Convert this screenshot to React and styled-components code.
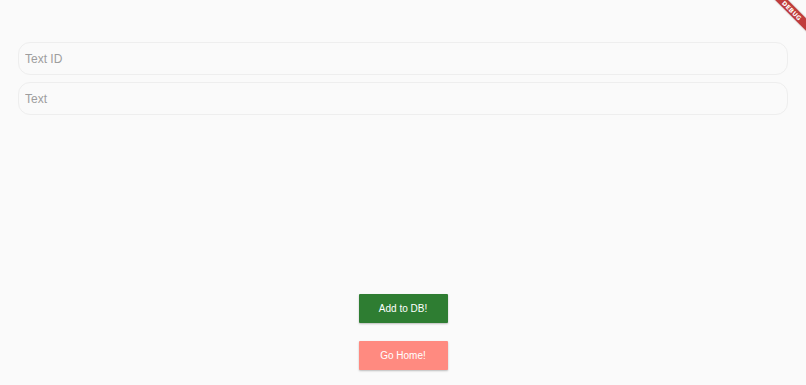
import React from 'react'
import styled, { createGlobalStyle } from 'styled-components'

const Global = createGlobalStyle`
  html, body { margin: 0; padding: 0; background: #fafafa; overflow: hidden; }
  body { font-family: "Liberation Sans", Arial, sans-serif; }
`

const Page = styled.div`
  position: relative;
  height: 385px;
  display: flex;
  flex-direction: column;
  padding: 42px 18px 15px;
  box-sizing: border-box;
  overflow: hidden;
`

const Fields = styled.div`
  display: flex;
  flex-direction: column;
  gap: 7px;
`

const Field = styled.input`
  height: 33px;
  box-sizing: border-box;
  border: 1px solid #eeeeee;
  border-radius: 12px;
  background: #fafafa;
  padding: 0 6px;
  font-family: "Liberation Sans", Arial, sans-serif;
  font-size: 12px;
  color: #333;
  outline: none;
  &::placeholder { color: #9e9e9e; }
`

const Actions = styled.div`
  margin-top: auto;
  display: flex;
  flex-direction: column;
  align-items: center;
  gap: 18px;
`

const Button = styled.button`
  width: 89px;
  height: 29px;
  border: none;
  border-radius: 1px;
  background: ${p => p.$bg};
  color: #fff;
  font-family: "Liberation Sans", Arial, sans-serif;
  font-size: 10px;
  box-shadow: 0 1px 2px rgba(0,0,0,0.25);
  cursor: pointer;
`

const Banner = styled.div`
  position: absolute;
  top: 6px;
  left: 762px;
  width: 60px;
  height: 9px;
  background: #b71c1c;
  opacity: 0.85;
  transform: rotate(45deg);
  display: flex;
  align-items: center;
  justify-content: center;
  color: #fff;
  font-family: "DejaVu Sans", sans-serif;
  font-weight: bold;
  font-size: 6px;
  letter-spacing: 0.2px;
  box-shadow: 0 0 2px rgba(0,0,0,0.3);
`

export default function App() {
  return (
    <>
      <Global />
      <Page>
        <Fields>
          <Field placeholder="Text ID" />
          <Field placeholder="Text" />
        </Fields>
        <Actions>
          <Button $bg="#2e7d32">Add to DB!</Button>
          <Button $bg="#ff8a80">Go Home!</Button>
        </Actions>
        <Banner>DEBUG</Banner>
      </Page>
    </>
  )
}
